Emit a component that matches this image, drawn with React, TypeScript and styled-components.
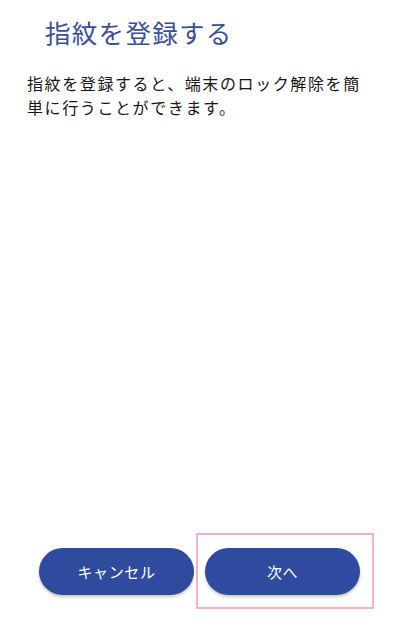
import styled, { createGlobalStyle } from "styled-components";

const GlobalStyle = createGlobalStyle`
  html, body {
    margin: 0;
    padding: 0;
    background: #ffffff;
  }
  body {
    font-family: "Noto Sans CJK JP", "Noto Sans", Roboto, sans-serif;
  }
`;

const Screen = styled.div`
  width: 400px;
  height: 620px;
  display: flex;
  flex-direction: column;
  background: #ffffff;
  overflow: hidden;
`;

const Title = styled.h1`
  margin: 0;
  padding: 15px 0 0 45px;
  font-size: 25.5px;
  line-height: 34px;
  font-weight: 400;
  color: #3a4e9c;
  letter-spacing: 1.3px;
`;

const Description = styled.p`
  margin: 0;
  padding: 22px 28px 0 27px;
  font-size: 16px;
  line-height: 24px;
  color: #161616;
  letter-spacing: 1.6px;
`;

const Spacer = styled.div`
  flex: 1;
`;

const Footer = styled.div`
  display: flex;
  align-items: center;
  padding: 0 0 11px 39px;
  gap: 2px;
`;

const Highlight = styled.div`
  display: flex;
  align-items: center;
  padding: 13px 12px 12px 7px;
  border: 2px solid #f3b1cc;
`;

const PillButton = styled.button`
  width: 155px;
  height: 47px;
  border: none;
  border-radius: 24px;
  background: #2f4b9f;
  color: #ffffff;
  font-family: "Noto Sans CJK JP", "Noto Sans", sans-serif;
  font-size: 15px;
  font-weight: 400;
  letter-spacing: 0.6px;
  box-shadow: 0 2px 3px rgba(0, 0, 0, 0.22);
  cursor: pointer;
`;

export default function App() {
  return (
    <>
      <GlobalStyle />
      <Screen>
        <Title>指紋を登録する</Title>
        <Description>
          指紋を登録すると、端末のロック解除を簡単に行うことができます。
        </Description>
        <Spacer />
        <Footer>
          <PillButton>キャンセル</PillButton>
          <Highlight>
            <PillButton>次へ</PillButton>
          </Highlight>
        </Footer>
      </Screen>
    </>
  );
}
